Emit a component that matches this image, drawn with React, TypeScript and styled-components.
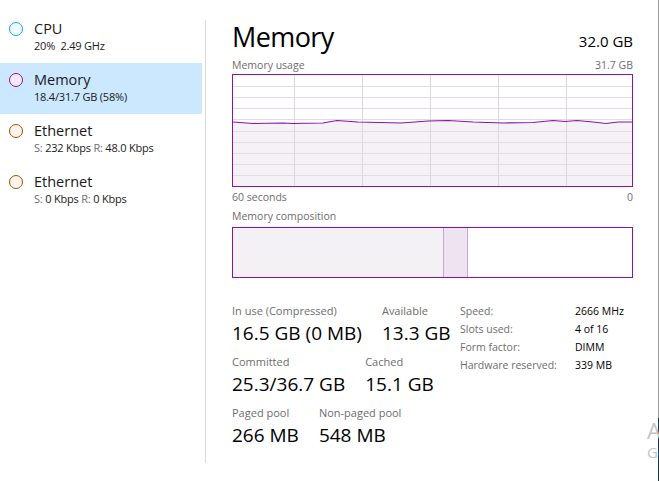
import React from "react";
import styled, { createGlobalStyle } from "styled-components";

const Global = createGlobalStyle`
  html, body { margin: 0; padding: 0; background: #fff; }
  body { font-family: "Open Sans", "Noto Sans", sans-serif; color: #000; }
`;

const Root = styled.div`
  position: relative;
  width: 659px;
  height: 481px;
  overflow: hidden;
  display: flex;
  background: #fff;
`;

const Sidebar = styled.div`
  width: 202px;
  padding-top: 12px;
  display: flex;
  flex-direction: column;
  flex-shrink: 0;
`;

const Item = styled.div<{ $selected?: boolean }>`
  height: 51px;
  box-sizing: border-box;
  display: flex;
  align-items: flex-start;
  padding: 8px 0 0 9px;
  background: ${(p) => (p.$selected ? "#cce8ff" : "transparent")};
`;

const Dot = styled.span<{ $stroke: string; $fill: string }>`
  width: 12px;
  height: 12px;
  border-radius: 50%;
  border: 1px solid ${(p) => p.$stroke};
  background: ${(p) => p.$fill};
  margin-top: 2px;
  margin-right: 11px;
  flex-shrink: 0;
`;

const ItemText = styled.div`
  display: flex;
  flex-direction: column;
`;

const ItemTitle = styled.div`
  font-size: 14.5px;
  line-height: 18px;
  color: #1a1a1a;
`;

const ItemSub = styled.div`
  font-size: 11px;
  line-height: 15px;
  color: #1a1a1a;
  letter-spacing: -0.2px;
`;

const Muted = styled.span`
  color: #6d6d6d;
`;

const Divider = styled.div`
  width: 1px;
  margin: 20px 0 18px 3px;
  background: #dadada;
  flex-shrink: 0;
`;

const Main = styled.div`
  width: 401px;
  padding: 19px 0 0 26px;
  display: flex;
  flex-direction: column;
`;

const Header = styled.div`
  display: flex;
  justify-content: space-between;
  align-items: baseline;
  height: 38px;
`;

const Title = styled.div`
  font-size: 27px;
  line-height: 35px;
  font-weight: 400;
  letter-spacing: -0.6px;
  color: #000;
`;

const Total = styled.div`
  font-size: 15px;
  color: #000;
`;

const LabelRow = styled.div<{ $mt?: number }>`
  display: flex;
  justify-content: space-between;
  font-size: 10.5px;
  line-height: 16px;
  color: #6d6d6d;
  margin-top: ${(p) => p.$mt ?? 0}px;
`;

const GraphBox = styled.div`
  width: 401px;
  height: 113px;
  box-sizing: border-box;
  border: 1px solid #8b12ae;
  display: flex;
  margin-top: 1px;
`;

const CompBox = styled.div`
  width: 401px;
  height: 51px;
  box-sizing: border-box;
  border: 1px solid #8b12ae;
  display: flex;
  margin-top: 3px;
`;

const CompSeg = styled.div<{ $bg: string; $w: string; $edge?: boolean }>`
  width: ${(p) => p.$w};
  flex: ${(p) => (p.$w === "auto" ? "1" : "none")};
  background: ${(p) => p.$bg};
  border-right: ${(p) => (p.$edge ? "1px solid #c6a8d0" : "none")};
`;

const Stats = styled.div`
  display: flex;
  margin-top: 25px;
`;

const LeftStats = styled.div`
  display: flex;
  flex-direction: column;
  width: 228px;
  gap: 6px;
`;

const StatRow = styled.div`
  display: flex;
  gap: 20px;
`;

const Stat = styled.div`
  display: flex;
  flex-direction: column;
`;

const StatLabel = styled.div`
  font-size: 11px;
  line-height: 16px;
  color: #6d6d6d;
`;

const StatValue = styled.div`
  font-size: 19px;
  line-height: 29px;
  color: #000;
`;

const RightStats = styled.div`
  display: grid;
  grid-template-columns: 115px auto;
  grid-auto-rows: 18px;
  font-size: 10.5px;
  line-height: 18px;
  margin-top: -1px;
`;

const KeyCell = styled.div`
  color: #6d6d6d;
  white-space: nowrap;
`;

const ValCell = styled.div`
  color: #000;
  white-space: nowrap;
`;

const EdgeLine = styled.div`
  position: absolute;
  top: 0;
  right: 0;
  width: 1px;
  height: 481px;
  background: linear-gradient(#9a9a9a 0, #9a9a9a 418px, #1f3550 418px);
`;

const Watermark = styled.div`
  position: absolute;
  left: 647px;
  top: 419px;
  color: #c4c4c4;
  white-space: nowrap;
  line-height: 1;
`;

const WmBig = styled.div`
  font-size: 22px;
`;

const WmSmall = styled.div`
  font-size: 15px;
  margin-top: 4px;
`;

const linePts: [number, number][] = [
  [0, 47], [20, 48.5], [50, 48], [60, 48.5], [90, 48], [104, 45.5], [125, 47],
  [168, 48], [195, 46], [215, 45.5], [240, 47], [270, 48], [300, 47.5],
  [320, 45.5], [332, 46.5], [344, 45.5], [360, 47], [373, 48.5], [385, 47], [399, 47],
];

function Graph() {
  const w = 399;
  const h = 111;
  const line = linePts.map(([x, y], i) => `${i ? "L" : "M"}${x} ${y}`).join(" ");
  const area = `${line} L${w} ${h} L0 ${h} Z`;
  const cols = [1, 2, 3, 4, 5].map((i) => i * 68 - 7.5 + 0.5);
  const rows = Array.from({ length: 9 }, (_, i) => (i + 1) * 11.2 - 0.5);
  return (
    <svg width={w} height={h} viewBox={`0 0 ${w} ${h}`}>
      <path d={area} fill="#f4f2f4" />
      {rows.map((y) => (
        <line key={"r" + y} x1={0} x2={w} y1={Math.round(y) + 0.5} y2={Math.round(y) + 0.5} stroke="#e4dbe6" strokeWidth={1} />
      ))}
      {cols.map((x) => (
        <line key={"c" + x} x1={Math.round(x) + 0.5} x2={Math.round(x) + 0.5} y1={0} y2={h} stroke="#dcd6dd" strokeWidth={1} />
      ))}
      <path d={line} fill="none" stroke="#8b12ae" strokeWidth={1.2} />
    </svg>
  );
}

const items = [
  { title: "CPU", sub: <>20%&nbsp; 2.49 GHz</>, stroke: "#1ca4e0", fill: "#f1f9fd" },
  { title: "Memory", sub: <>18.4/31.7 GB (58%)</>, stroke: "#8b12ae", fill: "#f4e9f7", selected: true },
  { title: "Ethernet", sub: <><Muted>S:</Muted> 232 Kbps <Muted>R:</Muted> 48.0 Kbps</>, stroke: "#a74f01", fill: "#fcf4ee" },
  { title: "Ethernet", sub: <><Muted>S:</Muted> 0 Kbps <Muted>R:</Muted> 0 Kbps</>, stroke: "#a74f01", fill: "#fcf4ee" },
];

const hw: [string, string][] = [
  ["Speed:", "2666 MHz"],
  ["Slots used:", "4 of 16"],
  ["Form factor:", "DIMM"],
  ["Hardware reserved:", "339 MB"],
];

export default function App() {
  return (
    <Root>
      <Global />
      <Sidebar>
        {items.map((it, i) => (
          <Item key={i} $selected={it.selected}>
            <Dot $stroke={it.stroke} $fill={it.fill} />
            <ItemText>
              <ItemTitle>{it.title}</ItemTitle>
              <ItemSub>{it.sub}</ItemSub>
            </ItemText>
          </Item>
        ))}
      </Sidebar>
      <Divider />
      <Main>
        <Header>
          <Title>Memory</Title>
          <Total>32.0 GB</Total>
        </Header>
        <LabelRow>
          <span>Memory usage</span>
          <span>31.7 GB</span>
        </LabelRow>
        <GraphBox>
          <Graph />
        </GraphBox>
        <LabelRow $mt={2}>
          <span>60 seconds</span>
          <span>0</span>
        </LabelRow>
        <LabelRow $mt={3}>
          <span>Memory composition</span>
        </LabelRow>
        <CompBox>
          <CompSeg $bg="#f3f1f4" $w="210px" $edge />
          <CompSeg $bg="#eee4f1" $w="23px" $edge />
          <CompSeg $bg="#ffffff" $w="auto" />
        </CompBox>
        <Stats>
          <LeftStats>
            <StatRow>
              <Stat>
                <StatLabel>In use (Compressed)</StatLabel>
                <StatValue>16.5 GB (0 MB)</StatValue>
              </Stat>
              <Stat>
                <StatLabel>Available</StatLabel>
                <StatValue>13.3 GB</StatValue>
              </Stat>
            </StatRow>
            <StatRow>
              <Stat>
                <StatLabel>Committed</StatLabel>
                <StatValue>25.3/36.7 GB</StatValue>
              </Stat>
              <Stat>
                <StatLabel>Cached</StatLabel>
                <StatValue>15.1 GB</StatValue>
              </Stat>
            </StatRow>
            <StatRow>
              <Stat>
                <StatLabel>Paged pool</StatLabel>
                <StatValue>266 MB</StatValue>
              </Stat>
              <Stat>
                <StatLabel>Non-paged pool</StatLabel>
                <StatValue>548 MB</StatValue>
              </Stat>
            </StatRow>
          </LeftStats>
          <RightStats>
            {hw.map(([k, v]) => (
              <React.Fragment key={k}>
                <KeyCell>{k}</KeyCell>
                <ValCell>{v}</ValCell>
              </React.Fragment>
            ))}
          </RightStats>
        </Stats>
      </Main>
      <EdgeLine />
      <Watermark>
        <WmBig>Activate Windows</WmBig>
        <WmSmall>Go to Settings to activate Windows.</WmSmall>
      </Watermark>
    </Root>
  );
}
